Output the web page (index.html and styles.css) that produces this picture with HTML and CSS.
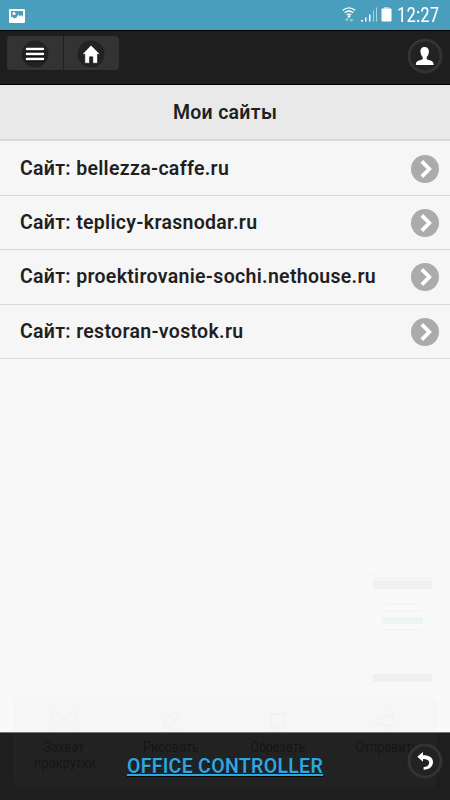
FILE: index.html
```html
<!DOCTYPE html>
<html lang="ru">
<head>
<meta charset="utf-8">
<title>Мои сайты</title>
<link rel="stylesheet" href="styles.css">
</head>
<body>
<div class="screen">
  <div class="status">
    <svg class="picture" width="16" height="14" viewBox="0 0 16 14"><rect width="16" height="14" rx="1" fill="#fff"/><path d="M2 2h12v6l-1.500-2-1.500 1.500-1.500-2-2 3-2.500 1-2-2-1 1z" fill="#4a9ebd"/><circle cx="5" cy="4.500" r="1.600" fill="#fff"/></svg>
    <svg class="signals" width="52" height="18" viewBox="0 0 52 18">
      <g fill="none" stroke="#fff" stroke-width="1.400"><path d="M.8 4.500Q7 -.7 13.200 4.500M2.800 6.800Q7 3.200 11.200 6.800M4.800 9Q7 7.200 9.200 9"/></g>
      <circle cx="7" cy="10.500" r="1.300" fill="#fff"/>
      <path d="M3 14.500l2-3 2 3zM7.500 13l2 3 2-3z" fill="#a1cdde"/>
      <path d="M19 15.500v-1.500h2v1.500zM23 15.500v-4h1.500v4zM27 15.500v-7h1.500v7z" fill="#fff"/><path d="M31 15.500v-11h1v11zM34 15.500v-14h1v14z" fill="#b0d4e2"/>
      <path d="M42 1h5v2h-5z" fill="#a5d0df"/><rect x="39.500" y="2.500" width="10" height="13" rx="1" fill="#fff"/>
    </svg>
    <span class="clock">12:27</span>
  </div>
  <header class="bar">
    <nav class="group">
      <a class="nav"><svg width="28" height="28" viewBox="0 0 28 28"><circle cx="14" cy="14" r="13.500" fill="#222"/><path d="M5.500 10h18M5.500 15h18M5.500 20h18" stroke="#000" stroke-width="3"/><path d="M6 9h16M6 14h16M6 19h16" stroke="#fff" stroke-width="2.500" stroke-linecap="round"/></svg></a>
      <a class="nav"><svg width="28" height="28" viewBox="0 0 28 28"><circle cx="14" cy="14" r="13.500" fill="#222"/><path d="M14 5.200l9 9h-2.500v9h-4.700v-6.400h-3.300v6.400H7.800v-9H5.300z" fill="#fff" stroke="#000" stroke-width=".5"/></svg></a>
    </nav>
    <svg class="round" width="36" height="36" viewBox="0 0 36 36"><circle cx="18" cy="18" r="16" fill="#222" stroke="#333" stroke-width="3"/><path d="M17.500 9c-3 0-4.300 2.200-4 5 .2 2.500 1.200 4 2.200 5v2.200l-5 1.800q-2 .8-2 4h18q0-3.200-2-4l-5-1.800V19c1-1 2-2.500 2.200-5 .3-2.800-1.400-5-4.400-5z" fill="#fff"/></svg>
  </header>
  <h1 class="title">Мои сайты</h1>
  <ul class="sites">
    <li class="row"><span>Сайт: bellezza-caffe.ru</span><svg class="go" viewBox="0 0 28 28"><circle cx="14" cy="14" r="14" fill="#ababab"/><path d="M10.800 6.300l7.500 7.700-7.500 7.700" fill="none" stroke="#fff" stroke-width="3.800"/></svg></li>
    <li class="row"><span>Сайт: teplicy-krasnodar.ru</span><svg class="go" viewBox="0 0 28 28"><circle cx="14" cy="14" r="14" fill="#ababab"/><path d="M10.800 6.300l7.500 7.700-7.500 7.700" fill="none" stroke="#fff" stroke-width="3.800"/></svg></li>
    <li class="row"><span>Сайт: proektirovanie-sochi.nethouse.ru</span><svg class="go" viewBox="0 0 28 28"><circle cx="14" cy="14" r="14" fill="#ababab"/><path d="M10.800 6.300l7.500 7.700-7.500 7.700" fill="none" stroke="#fff" stroke-width="3.800"/></svg></li>
    <li class="row"><span>Сайт: restoran-vostok.ru</span><svg class="go" viewBox="0 0 28 28"><circle cx="14" cy="14" r="14" fill="#ababab"/><path d="M10.800 6.300l7.500 7.700-7.500 7.700" fill="none" stroke="#fff" stroke-width="3.800"/></svg></li>
  </ul>
  <footer class="footer">
    <a class="brand">OFFICE CONTROLLER</a>
    <svg class="round back" width="36" height="36" viewBox="0 0 36 36"><circle cx="18" cy="18" r="16" fill="#222" stroke="#333" stroke-width="3"/><path d="M10.300 13.800L16 9v3.300c6.500 0 10 2.500 10 6.700 0 4.500-3.300 7.500-9.400 7.800v-2.700c3.400-.3 5.600-1.900 5.600-4.600 0-2.200-2.200-3.400-6.200-3.400v2.700z" fill="#fff"/></svg>
  </footer>

  <div class="preview">
    <div class="preview-status"></div>
    <div class="preview-bar"></div>
    <div class="preview-body"><i class="line"></i><i class="line wide"></i><i class="field"></i><i class="line wide"></i><i class="box"></i></div>
    <div class="preview-bar"></div>
  </div>
  <div class="tools">
    <div class="tool"><svg viewBox="0 0 26 20"><path d="M1 6V1h6M19 1h6v5M25 13v5h-6M7 18H1v-5M9 6l4 3 4-3M9 10l4 3 4-3"/></svg><span>Захват прокрутки</span></div>
    <div class="tool"><svg viewBox="0 0 26 20"><path d="M4 18l2-7L16 1l5 4-10 10zM6 11l5 4M13 19h11"/></svg><span>Рисовать</span></div>
    <div class="tool"><svg viewBox="0 0 26 20"><path d="M6 0v17h14V3H6M2 17h4M20 0v3h4"/></svg><span>Обрезать</span></div>
    <div class="tool"><svg viewBox="0 0 26 20"><circle cx="6" cy="10" r="3"/><circle cx="18" cy="3" r="3"/><circle cx="18" cy="17" r="3"/><path d="M9 9l7-5M9 11l7 5"/></svg><span>Отправить</span></div>
  </div>
</div>
</body>
</html>
```
FILE: styles.css
```css
* { box-sizing: border-box; }
body { margin: 0; font-family: Roboto, sans-serif; color: #1f1f1f; }
.screen { position: relative; width: 450px; height: 800px; display: flex; flex-direction: column; background: #f9f9f9; overflow: hidden; }
svg { display: block; flex: none; }
.status { height: 30px; flex: none; display: flex; align-items: center; padding: 0 11px 0 9px; background: #4a9ebd; }
.picture { margin-top: 1px; }
.signals { margin: 0 2px 0 auto; }
.clock { width: 42px; padding-top: 1px; margin-left: 1px; color: #fff; font-size: 19.5px; line-height: 30px; white-space: nowrap; font-stretch: condensed; transform: scaleX(.98); transform-origin: left; }
.bar { height: 55px; flex: none; display: flex; justify-content: space-between; padding: 5px 7px 0; background: #1e1e1e; border-top: 1px solid #000; border-bottom: 1px solid #000; }
.group { display: flex; height: 34px; border-radius: 4px; background: #333; overflow: hidden; }
.nav { width: 56px; padding-top: 1px; display: flex; align-items: center; justify-content: center; }
.nav + .nav { padding-right: 2px; border-left: 1px solid #1f1f1f; }
.bar .round { margin-top: 2px; }
.title { height: 56px; flex: none; margin: 0; background: #e9e9e9; border-bottom: 2px solid #dadada; font-size: 19.5px; line-height: 55px; font-weight: 600; text-align: center; letter-spacing: .3px; }
.sites { list-style: none; margin: 0; padding: 0; }
.row { height: 54.3px; display: flex; align-items: center; justify-content: space-between; padding: 0 11px 0 20px; background: #f6f6f6; border-bottom: 1px solid #d8d8d8; font-size: 19.5px; font-weight: 600; letter-spacing: .31px; white-space: nowrap; }
.row:first-child { height: 55px; padding-top: 1px; }
.row:last-child { padding-top: 1px; }
.go { width: 28px; height: 28px; }
.footer { height: 68px; margin-top: auto; display: flex; align-items: flex-start; justify-content: center; position: relative; background: #1e1e1e; border-top: 1px solid #6f7775; }
.brand { color: #2aa8e0; font-size: 19.5px; font-weight: 600; line-height: 67px; letter-spacing: .3px; text-decoration: underline 1.5px; text-shadow: 0 1px 0 #000; white-space: nowrap; }
.back { position: absolute; right: 7px; top: 10px; z-index: 2; }
.preview { position: absolute; left: 369px; top: 573px; width: 67px; height: 113px; border: 1px solid #f6f6f6; padding: 3px; display: flex; flex-direction: column; background: #f8f8f8; }
.preview-status { height: 4px; background: #f1f5f5; }
.preview-bar { height: 8px; background: #f0f0f0; }
.preview-body { flex: 1; display: flex; flex-direction: column; align-items: center; gap: 5px; padding-top: 14px; background: #f9f9f9; }
.line { width: 32px; height: 2px; background: #f5f5f5; }
.wide { width: 38px; }
.field { width: 41px; height: 7px; background: #ecf5f5; }
.box { width: 54px; height: 5px; border: 1px solid #f6f6f6; }
.tools { position: absolute; left: 13px; top: 697px; width: 424px; height: 91px; border-radius: 7px; display: grid; grid-template-columns: repeat(4, 107px); padding: 14px 0 0; background: rgba(170, 170, 170, .03); }
.tool { display: flex; flex-direction: column; align-items: center; padding-right: 5px; font-size: 14px; line-height: 16px; color: #161616; }
.tool svg { width: 26px; height: 20px; margin-bottom: 8px; fill: none; stroke: #f1f1f1; stroke-width: 1.3; }
.tool span { width: 66px; text-align: center; transform: scaleX(.9); }
```
